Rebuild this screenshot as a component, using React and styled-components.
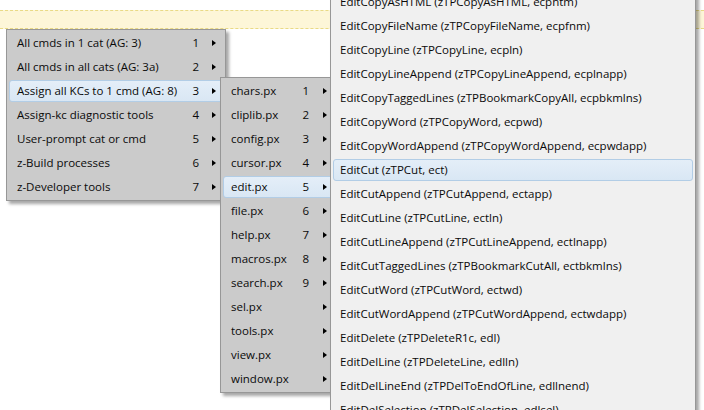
import React from "react";
import styled, { createGlobalStyle } from "styled-components";

const Global = createGlobalStyle`
  html, body { margin: 0; padding: 0; background: #fff; }
  body { font-family: "Open Sans", "Noto Sans", sans-serif; }
`;

const Canvas = styled.div`
  position: relative;
  width: 704px;
  height: 410px;
  overflow: hidden;
  background: #fff;
  padding-top: 10px;
  box-sizing: border-box;
`;

const CurrentLine = styled.div`
  height: 17px;
  background: #fdf6d8;
  border-top: 1px dashed #e9da86;
  border-bottom: 1px dashed #e9da86;
`;

const Popup = styled.div`
  position: absolute;
  left: ${(p) => p.$left}px;
  top: ${(p) => p.$top}px;
  width: ${(p) => p.$width}px;
  z-index: ${(p) => p.$z};
  background: ${(p) => (p.$active ? "#f0f0f0" : "#cbcbcb")};
  border: 1px solid #979797;
  box-shadow: 3px 3px 3px rgba(0, 0, 0, 0.35);
  padding: 1px;
  display: flex;
  flex-direction: column;
  font-family: "Open Sans", "Noto Sans", sans-serif;
  font-size: 11.5px;
  color: #0a0a0a;
`;

const Row = styled.div`
  position: relative;
  display: flex;
  align-items: center;
  height: 24px;
  padding-left: ${(p) => p.$pad}px;
  padding-right: ${(p) => p.$padR || 0}px;
  box-sizing: border-box;
  white-space: nowrap;
  ${(p) =>
    p.$hl &&
    `
    &::before {
      content: "";
      position: absolute;
      left: 1px; right: 1px; top: 1px; bottom: 1px;
      border: 1px solid #b2cde6;
      border-radius: 3px;
      background: linear-gradient(#e4eef8, #d9e7f4);
      z-index: 0;
    }
  `}
`;

const Label = styled.span`
  position: relative;
  flex: 1;
  margin-top: -1px;
`;

const Num = styled.span`
  position: relative;
  width: 12px;
  text-align: right;
  margin-top: -1px;
`;

const Arrow = styled.span`
  position: relative;
  margin-left: ${(p) => p.$gap}px;
  width: 0;
  height: 0;
  border-left: 4px solid #000;
  border-top: 3.5px solid transparent;
  border-bottom: 3.5px solid transparent;
`;

const menu1 = [
  ["All cmds in 1 cat (AG: 3)", "1"],
  ["All cmds in all cats (AG: 3a)", "2"],
  ["Assign all KCs to 1 cmd (AG: 8)", "3"],
  ["Assign-kc diagnostic tools", "4"],
  ["User-prompt cat or cmd", "5"],
  ["z-Build processes", "6"],
  ["z-Developer tools", "7"],
];

const menu2 = [
  ["chars.px", "1"],
  ["cliplib.px", "2"],
  ["config.px", "3"],
  ["cursor.px", "4"],
  ["edit.px", "5"],
  ["file.px", "6"],
  ["help.px", "7"],
  ["macros.px", "8"],
  ["search.px", "9"],
  ["sel.px", ""],
  ["tools.px", ""],
  ["view.px", ""],
  ["window.px", ""],
];

const menu3 = [
  "EditCopyAsHTML (zTPCopyAsHTML, ecphtm)",
  "EditCopyFileName (zTPCopyFileName, ecpfnm)",
  "EditCopyLine (zTPCopyLine, ecpln)",
  "EditCopyLineAppend (zTPCopyLineAppend, ecplnapp)",
  "EditCopyTaggedLines (zTPBookmarkCopyAll, ecpbkmlns)",
  "EditCopyWord (zTPCopyWord, ecpwd)",
  "EditCopyWordAppend (zTPCopyWordAppend, ecpwdapp)",
  "EditCut (zTPCut, ect)",
  "EditCutAppend (zTPCutAppend, ectapp)",
  "EditCutLine (zTPCutLine, ectln)",
  "EditCutLineAppend (zTPCutLineAppend, ectlnapp)",
  "EditCutTaggedLines (zTPBookmarkCutAll, ectbkmlns)",
  "EditCutWord (zTPCutWord, ectwd)",
  "EditCutWordAppend (zTPCutWordAppend, ectwdapp)",
  "EditDelete (zTPDeleteR1c, edl)",
  "EditDelLine (zTPDeleteLine, edlln)",
  "EditDelLineEnd (zTPDelToEndOfLine, edllnend)",
  "EditDelSelection (zTPDelSelection, edlsel)",
];

export default function App() {
  return (
    <>
      <Global />
      <Canvas>
        <CurrentLine />
        <Popup $left={6} $top={29} $width={216} $z={1}>
          {menu1.map(([l, n], i) => (
            <Row key={l} $pad={9} $padR={8} $hl={i === 2}>
              <Label>{l}</Label>
              <Num>{n}</Num>
              <Arrow $gap={13} />
            </Row>
          ))}
        </Popup>
        <Popup $left={220} $top={77} $width={130} $z={2}>
          {menu2.map(([l, n], i) => (
            <Row key={l} $pad={9} $padR={25} $hl={i === 4}>
              <Label>{l}</Label>
              <Num>{n}</Num>
              <Arrow $gap={14} />
            </Row>
          ))}
        </Popup>
        <Popup $left={330} $top={-12} $width={362} $z={3} $active>
          {menu3.map((l, i) => (
            <Row key={l} $pad={8} $hl={i === 7}>
              <Label>{l}</Label>
            </Row>
          ))}
        </Popup>
      </Canvas>
    </>
  );
}
